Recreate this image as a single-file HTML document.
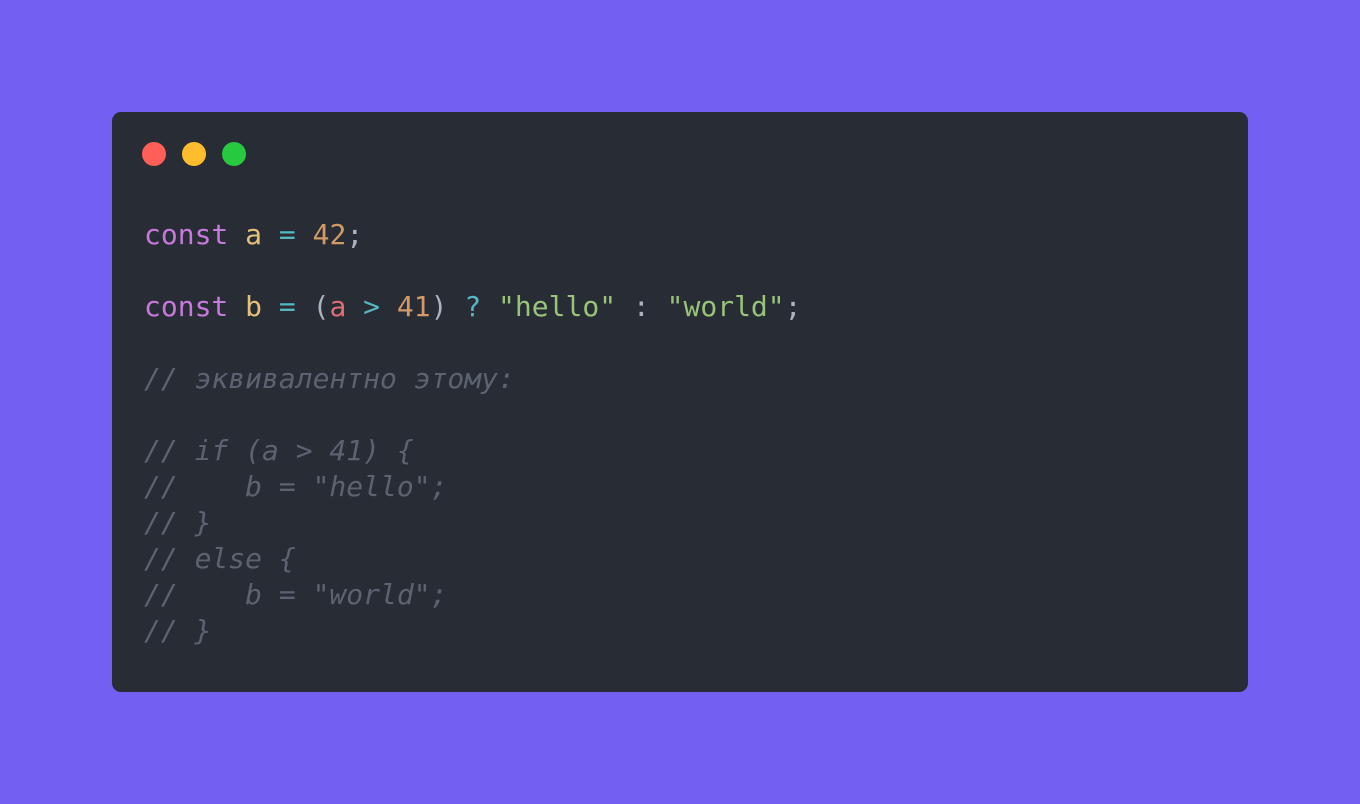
<!DOCTYPE html>
<html><head><meta charset="utf-8"><style>
body{margin:0;width:1360px;height:804px;background:#7360f2;position:relative;overflow:hidden}
.card{position:absolute;left:112px;top:112px;width:1136px;height:580px;background:#282c34;border-radius:9px}
.dot{position:absolute;top:30px;width:24px;height:24px;border-radius:50%}
pre{position:absolute;left:32px;top:105px;margin:0;font-family:"DejaVu Sans Mono","Liberation Mono",monospace;font-size:28px;line-height:36px;color:#abb2bf}
.k{color:#c678dd}.v{color:#e5c07b}.o{color:#56b6c2}.n{color:#d19a66}.r{color:#e06c75}.s{color:#98c379}.c{color:#5c6370;font-style:italic}
</style></head><body><div class="card">
<div class="dot" style="left:30px;background:#ff5f56"></div>
<div class="dot" style="left:70px;background:#ffbd2e"></div>
<div class="dot" style="left:110px;background:#27c93f"></div>
<pre><span class="k">const</span> <span class="v">a</span> <span class="o">=</span> <span class="n">42</span>;

<span class="k">const</span> <span class="v">b</span> <span class="o">=</span> (<span class="r">a</span> <span class="o">&gt;</span> <span class="n">41</span>) <span class="o">?</span> <span class="s">"hello"</span> : <span class="s">"world"</span>;

<span class="c">// эквивалентно этому:</span>

<span class="c">// if (a &gt; 41) {</span>
<span class="c">//    b = "hello";</span>
<span class="c">// }</span>
<span class="c">// else {</span>
<span class="c">//    b = "world";</span>
<span class="c">// }</span></pre>
</div></body></html>
